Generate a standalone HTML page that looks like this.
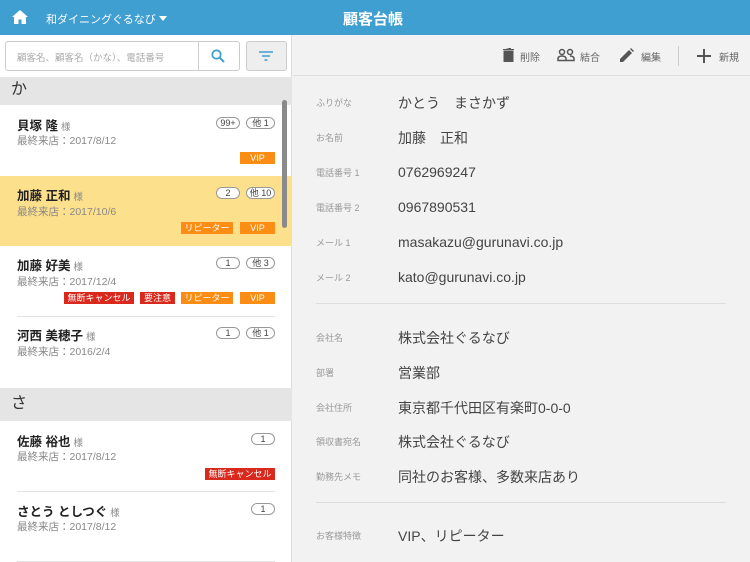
<!DOCTYPE html>
<html><head><meta charset="utf-8"><style>
*{margin:0;padding:0;box-sizing:border-box}
body{width:750px;height:562px;overflow:hidden;background:#f2f2f2;font-family:"Liberation Sans","Noto Sans CJK JP",sans-serif;position:relative;color:#333}
.a{position:absolute}
.hdr{left:0;top:0;width:750px;height:35px;background:#3f9fd0}
.left{left:0;top:35px;width:292px;height:527px;background:#fff;border-right:1px solid #ddd}
.sec{left:0;width:292px;background:#e5e5e5;font-size:16px;color:#333;padding-left:11px}
.name{font-size:12.5px;font-weight:bold;color:#222;white-space:nowrap}
.name small{font-size:9.5px;font-weight:normal;color:#888;margin-left:3px}
.date{font-size:10.5px;color:#888;white-space:nowrap}
.bdg{height:12px;border:1px solid #999;border-radius:6px;font-size:9px;line-height:10px;text-align:center;color:#444;background:#fff}
.tag{height:12px;font-size:9px;line-height:12px;color:#fff;text-align:center;white-space:nowrap;overflow:hidden}
.r{background:#d9291c}.o{background:#fb8c14}
.line{height:1px;background:#e3e3e3}
.lbl{left:316px;font-size:9px;color:#999}
.val{left:398px;font-size:14px;color:#444;white-space:nowrap}
.tb{font-size:10px;color:#666}
</style></head><body>
<div class="a hdr"></div>
<svg class="a" style="left:12px;top:10px" width="16" height="14" viewBox="0 0 16 14"><path d="M8 0L0 7h2v7h4.5V9.5h3V14H14V7h2z" fill="#fff"/></svg>
<div class="a" style="left:46px;top:11px;font-size:11px;color:#fff;white-space:nowrap">和ダイニングぐるなび</div>
<svg class="a" style="left:159px;top:16px" width="8" height="5"><path d="M0 0h8L4 5z" fill="#fff"/></svg>
<div class="a" style="left:343px;top:8px;font-size:15px;font-weight:bold;color:#fff">顧客台帳</div>

<div class="a left"></div>
<div class="a" style="left:5px;top:41px;width:235px;height:30px;border:1px solid #ccc;border-radius:3px;background:#fff"></div>
<div class="a" style="left:198px;top:42px;width:1px;height:28px;background:#ccc"></div>
<div class="a" style="left:17px;top:50px;font-size:9.5px;color:#aaa">顧客名、顧客名（かな）、電話番号</div>
<svg class="a" style="left:211px;top:49px" width="14" height="14" viewBox="0 0 14 14"><circle cx="5.5" cy="5.5" r="4.2" fill="none" stroke="#3f9fd0" stroke-width="1.8"/><path d="M8.6 8.6L13 13" stroke="#3f9fd0" stroke-width="2"/></svg>
<div class="a" style="left:246px;top:41px;width:41px;height:30px;border:1px solid #ccc;border-radius:3px;background:#eee"></div>
<svg class="a" style="left:259px;top:51px" width="14" height="10"><path d="M0 1h14M3 5h8M5.5 9h3" stroke="#3f9fd0" stroke-width="1.6"/></svg>

<div class="a sec" style="top:77px;height:28px;line-height:26px">か</div>
<div class="a name" style="left:17px;top:115px">貝塚 隆<small>様</small></div>
<div class="a date" style="left:17px;top:133px">最終来店：2017/8/12</div>
<div class="a bdg" style="left:216px;top:117px;width:24px">99+</div>
<div class="a bdg" style="left:246px;top:117px;width:29px">他 1</div>
<div class="a tag o" style="left:240px;top:152px;width:35px">VIP</div>

<div class="a" style="left:0;top:176px;width:292px;height:70px;background:#fde08c"></div>
<div class="a name" style="left:17px;top:185px">加藤 正和<small>様</small></div>
<div class="a date" style="left:17px;top:204px">最終来店：2017/10/6</div>
<div class="a bdg" style="left:216px;top:187px;width:24px">2</div>
<div class="a bdg" style="left:246px;top:187px;width:29px">他 10</div>
<div class="a tag o" style="left:181px;top:222px;width:52px">リピーター</div>
<div class="a tag o" style="left:240px;top:222px;width:35px">VIP</div>

<div class="a name" style="left:17px;top:255px">加藤 好美<small>様</small></div>
<div class="a date" style="left:17px;top:274px">最終来店：2017/12/4</div>
<div class="a bdg" style="left:216px;top:257px;width:24px">1</div>
<div class="a bdg" style="left:246px;top:257px;width:29px">他 3</div>
<div class="a tag r" style="left:64px;top:292px;width:70px">無断キャンセル</div>
<div class="a tag r" style="left:140px;top:292px;width:35px">要注意</div>
<div class="a tag o" style="left:181px;top:292px;width:52px">リピーター</div>
<div class="a tag o" style="left:240px;top:292px;width:35px">VIP</div>
<div class="a line" style="left:17px;top:316px;width:258px"></div>

<div class="a name" style="left:17px;top:325px">河西 美穂子<small>様</small></div>
<div class="a date" style="left:17px;top:344px">最終来店：2016/2/4</div>
<div class="a bdg" style="left:216px;top:327px;width:24px">1</div>
<div class="a bdg" style="left:246px;top:327px;width:29px">他 1</div>

<div class="a sec" style="top:388px;height:33px;line-height:31px">さ</div>
<div class="a name" style="left:17px;top:431px">佐藤 裕也<small>様</small></div>
<div class="a date" style="left:17px;top:449px">最終来店：2017/8/12</div>
<div class="a bdg" style="left:251px;top:433px;width:24px">1</div>
<div class="a tag r" style="left:205px;top:468px;width:70px">無断キャンセル</div>
<div class="a line" style="left:17px;top:491px;width:258px"></div>
<div class="a name" style="left:17px;top:501px">さとう としつぐ<small>様</small></div>
<div class="a date" style="left:17px;top:519px">最終来店：2017/8/12</div>
<div class="a bdg" style="left:251px;top:503px;width:24px">1</div>
<div class="a line" style="left:17px;top:561px;width:258px"></div>
<div class="a" style="left:282px;top:100px;width:5px;height:128px;border-radius:3px;background:#8a8a8a"></div>

<div class="a" style="left:293px;top:75px;width:457px;height:1px;background:#ddd"></div>
<svg class="a" style="left:503px;top:48px" width="11" height="14"><path d="M0 1.5h11M3.5 0h4v1.5M1 3h9v11H1z" fill="#555" stroke="#555" stroke-width="1"/></svg>
<div class="a tb" style="left:520px;top:49px">削除</div>
<svg class="a" style="left:557px;top:48px" width="18" height="14" viewBox="0 0 18 14" fill="none" stroke="#555" stroke-width="1.5"><circle cx="5" cy="4" r="2.5"/><circle cx="13" cy="4" r="2.5"/><path d="M1 12.5v-2c0-1.5 2-2.5 4-2.5s4 1 4 2.5v2zM9 12.5h8v-2c0-1.5-2-2.5-4-2.5"/></svg>
<div class="a tb" style="left:580px;top:49px">結合</div>
<svg class="a" style="left:620px;top:48px" width="14" height="14"><path d="M0 14v-3L9 2l3 3-9 9zM10 1l1-1 3 3-1 1z" fill="#555"/></svg>
<div class="a tb" style="left:641px;top:49px">編集</div>
<div class="a" style="left:678px;top:46px;width:1px;height:20px;background:#ccc"></div>
<svg class="a" style="left:697px;top:49px" width="14" height="14"><path d="M7 0v14M0 7h14" stroke="#555" stroke-width="2"/></svg>
<div class="a tb" style="left:719px;top:49px">新規</div>

<div class="a lbl" style="top:96px">ふりがな</div><div class="a val" style="top:93px">かとう　まさかず</div>
<div class="a lbl" style="top:131px">お名前</div><div class="a val" style="top:128px">加藤　正和</div>
<div class="a lbl" style="top:166px">電話番号 1</div><div class="a val" style="top:164px">0762969247</div>
<div class="a lbl" style="top:201px">電話番号 2</div><div class="a val" style="top:199px">0967890531</div>
<div class="a lbl" style="top:236px">メール 1</div><div class="a val" style="top:234px">masakazu@gurunavi.co.jp</div>
<div class="a lbl" style="top:271px">メール 2</div><div class="a val" style="top:269px">kato@gurunavi.co.jp</div>
<div class="a line" style="left:316px;top:303px;width:410px;background:#ddd"></div>
<div class="a lbl" style="top:331px">会社名</div><div class="a val" style="top:328px">株式会社ぐるなび</div>
<div class="a lbl" style="top:366px">部署</div><div class="a val" style="top:363px">営業部</div>
<div class="a lbl" style="top:401px">会社住所</div><div class="a val" style="top:398px">東京都千代田区有楽町0-0-0</div>
<div class="a lbl" style="top:435px">領収書宛名</div><div class="a val" style="top:432px">株式会社ぐるなび</div>
<div class="a lbl" style="top:470px">勤務先メモ</div><div class="a val" style="top:467px">同社のお客様、多数来店あり</div>
<div class="a line" style="left:316px;top:502px;width:410px;background:#ddd"></div>
<div class="a lbl" style="top:529px">お客様特徴</div><div class="a val" style="top:526px">VIP、リピーター</div>
</body></html>
